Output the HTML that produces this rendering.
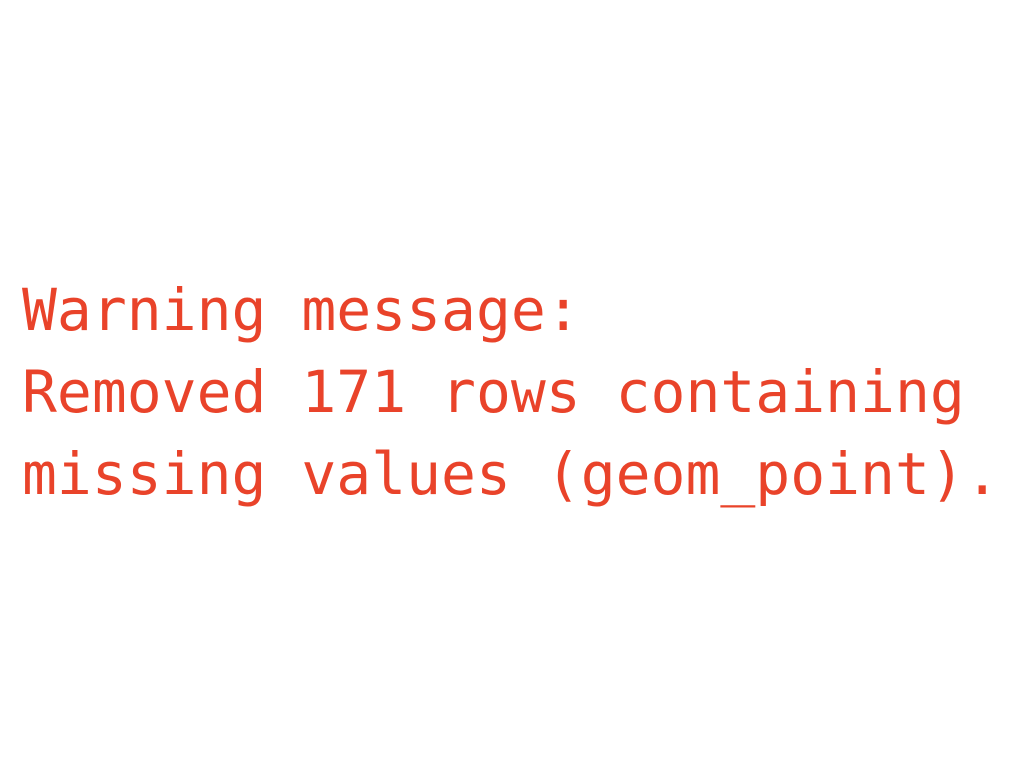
<!DOCTYPE html>
<html><head><style>
html,body{margin:0;padding:0;background:#fff;width:1024px;height:768px;overflow:hidden}
pre{position:absolute;left:22px;top:269px;margin:0;font-family:"DejaVu Sans Mono","Liberation Mono",monospace;font-size:58px;line-height:82px;color:#e9432a}
</style></head><body>
<pre>Warning message:
Removed 171 rows containing
missing values (geom_point).</pre>
</body></html>
